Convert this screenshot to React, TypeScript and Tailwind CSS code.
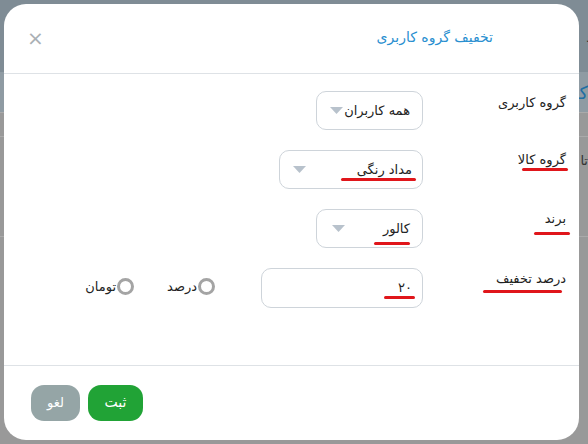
import React from 'react';

const font = { fontFamily: '"DejaVu Sans", "Noto Sans", sans-serif' };

const Underline: React.FC<{ className: string }> = ({ className }) => (
  <span className={`absolute h-[3px] rounded-full bg-[#e0161b] ${className}`} />
);

const Caret = () => (
  <svg width="13" height="8" viewBox="0 0 13 8" className="shrink-0">
    <path d="M0 0 H13 L6.5 7 Z" fill="#b8c2cc" />
  </svg>
);

const Radio: React.FC<{ label: string }> = ({ label }) => (
  <label className="flex items-center gap-[1px] text-[13px] text-[#222]">
    <span className="w-[17px] h-[17px] rounded-full border-[3px] border-[#a4a4a4] bg-white" />
    <span>{label}</span>
  </label>
);

export default function App() {
  return (
    <div className="relative w-[588px] h-[444px] overflow-hidden bg-[#999999]" style={font} dir="rtl">
      {/* dimmed page behind the dialog */}
      <div className="flex flex-col h-full">
        <div className="h-[72px] bg-[#7f8c95] flex items-center text-[13px] text-[#333]">
          <span className="pt-[4px] -mr-[4px]">د</span>
        </div>
        <div className="h-[40px] bg-[#8f9ba3] flex items-center text-[18px] text-[#1f6ea3]">
          <span>کا</span>
        </div>
        <div className="h-[24px] border-t border-[#aaa] bg-[#999]" />
        <div className="h-[100px] border-t border-[#aaa] flex items-start pt-[14px] text-[13px] text-[#333]">
          <span>تا</span>
        </div>
        <div className="flex-1 border-t border-[#aaa]" />
      </div>

      {/* dialog */}
      <div className="absolute left-[4px] top-[4px] w-[575px] h-[436px] bg-white rounded-[22px] flex flex-col">
        <div className="h-[70px] shrink-0 border-b border-[#dee2e6] flex items-center justify-between pr-[86px] pl-[23px]">
          <h2 className="text-[14px] text-[#2a8fd0] pb-[2px]">تخفیف گروه کاربری</h2>
          <span className="text-[20px] leading-none text-[#aab0b4] pb-[2px]">×</span>
        </div>

        <div className="flex-1 flex flex-col gap-[20px] pt-[17px] pr-[13px]">
          <div className="flex items-start">
            <div className="w-[143px] pt-[2px] text-[13px] leading-[20px] text-[#222]">گروه کاربری</div>
            <div className="h-[39px] w-[107px] rounded-[10px] border border-[#ced4da] flex items-center gap-[1px] pr-[12px] text-[13px] text-[#222]">
              <span>همه کاربران</span>
              <Caret />
            </div>
          </div>

          <div className="flex items-start">
            <div className="w-[143px] text-[13px] leading-[20px] text-[#222] relative">
              <span>گروه کالا</span>
              <Underline className="right-[-2px] top-[18px] w-[46px]" />
            </div>
            <div className="relative h-[39px] w-[144px] rounded-[10px] border border-[#ced4da] flex items-center justify-between pr-[10px] pl-[13px] text-[13px] text-[#222]">
              <span>مداد رنگی</span>
              <Caret />
              <Underline className="right-[6px] top-[27px] w-[75px]" />
            </div>
          </div>

          <div className="flex items-start">
            <div className="w-[143px] text-[13px] leading-[20px] text-[#222] relative">
              <span>برند</span>
              <Underline className="right-[-4px] top-[23px] w-[36px]" />
            </div>
            <div className="relative h-[39px] w-[107px] rounded-[10px] border border-[#ced4da] flex items-center justify-between pr-[12px] pl-[15px] text-[13px] text-[#222]">
              <span>کالور</span>
              <Caret />
              <Underline className="right-[12px] top-[32px] w-[36px]" />
            </div>
          </div>

          <div className="flex items-start">
            <div className="w-[143px] pt-[1px] text-[13px] leading-[20px] text-[#222] relative">
              <span>درصد تخفیف</span>
              <Underline className="right-[4px] top-[22px] w-[79px]" />
            </div>
            <div className="relative h-[40px] w-[162px] rounded-[10px] border border-[#ced4da] flex items-center pr-[10px] text-[13px] text-[#222]">
              <span>۲۰</span>
              <Underline className="right-[7px] top-[27px] w-[31px]" />
            </div>
            <div className="flex items-center gap-[33px] mr-[46px] pt-[9px]">
              <Radio label="درصد" />
              <Radio label="تومان" />
            </div>
          </div>
        </div>

        <div className="h-[75px] shrink-0 border-t border-[#dee2e6] flex items-center justify-end pl-[27px] gap-[8px] pb-[1px]">
          <button className="h-[36px] w-[55px] rounded-[13px] bg-[#21a336] text-white text-[14px]">ثبت</button>
          <button className="h-[36px] w-[49px] rounded-[13px] bg-[#95a5a6] text-white text-[13px]">لغو</button>
        </div>
      </div>
    </div>
  );
}
